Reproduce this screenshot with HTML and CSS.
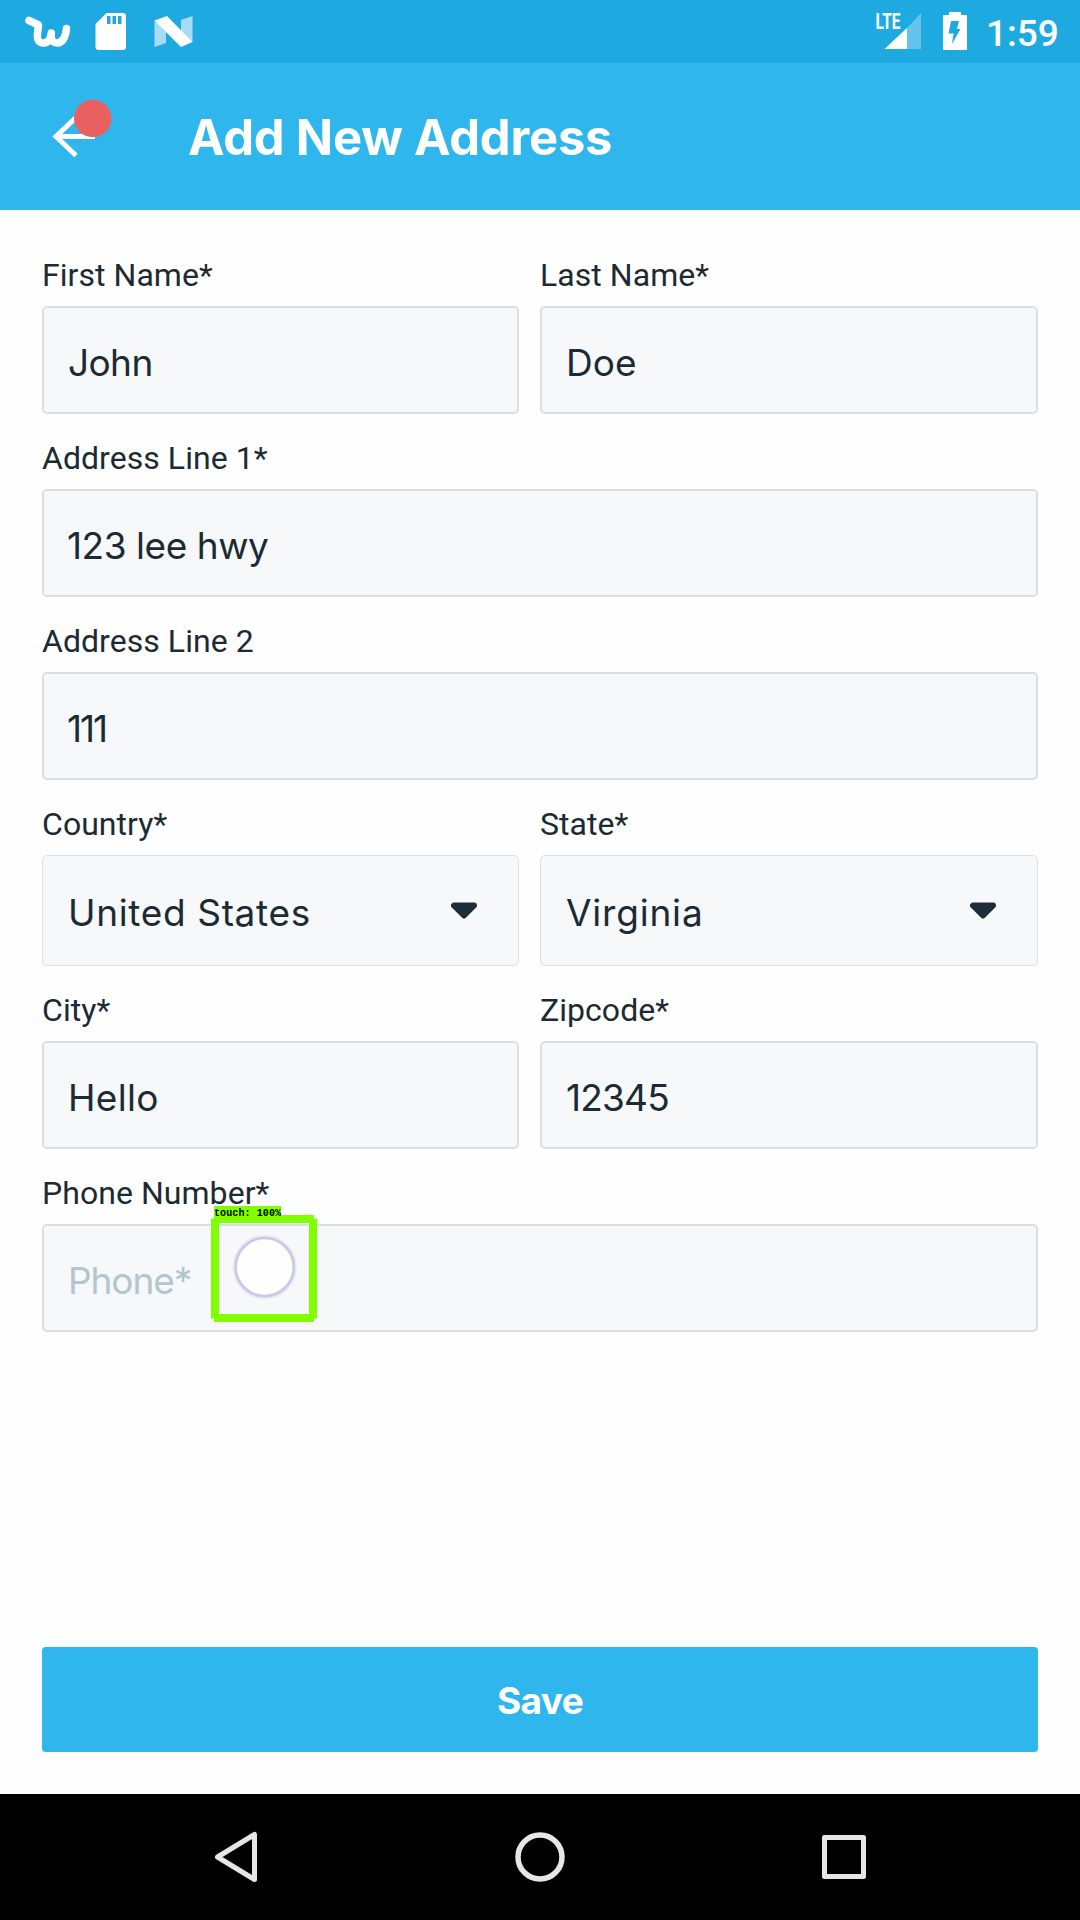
FILE: index.html
```html
<!DOCTYPE html>
<html lang="en">
<head>
<meta charset="utf-8">
<title>Add New Address</title>
<link rel="stylesheet" href="styles.css">
</head>
<body>
<div class="screen">
  <div class="status-bar">
    <svg class="status-icons" width="200" height="63" viewBox="0 0 200 63">
      <g fill="none" stroke="#fff" stroke-width="7.5" stroke-linejoin="round">
        <path stroke-linecap="round" d="M29 20.5 L38.5 25 L37.3 35 Q37 43 43.5 43 Q50 43 51.3 33 Q50.500 43 57 43 Q65 42.500 66.500 28.500"/>
      </g>
      <path fill="#fff" d="M106.500 13 H123 Q126 13 126 16 V47 Q126 50 123 50 H98.500 Q95.500 50 95.500 47 V24 Z"/>
      <path fill="#1fa9e1" d="M107 16h3.500v8h-3.500z M112.500 16h3.500v8h-3.500z M118 16h3.500v8h-3.500z"/>
      <path fill="#a6dcf4" d="M154.500 20.500 L166 31 V43 L154.500 47 Z M192.500 16 V42 L181 32 V20 Z"/>
      <path fill="#fff" d="M154.500 20.500 L167 16 L192.500 42 L181 47 Z"/>
    </svg>
    <div class="status-right">
      <svg width="104" height="63" viewBox="870 0 104 63">
        <text class="lte" x="875.500" y="29" textLength="25" lengthAdjust="spacingAndGlyphs">LTE</text>
        <path fill="#65c4ec" d="M921 13 V49 H907 V28 Z"/>
        <path fill="#fff" d="M884.500 49 L907 28 V49 Z"/>
        <path fill="#fff" d="M943 15 H949 V12 H961 V15 H967 V50 H943 Z"/>
        <path fill="#1fa9e1" d="M951 21 H959 L957 29 H960.500 L952 44 L953.500 33.500 H948.500 Z"/>
      </svg>
      <span class="clock">1:59</span>
    </div>
  </div>

  <header class="app-bar">
    <svg class="back" width="72" height="70" viewBox="48 94 72 70">
      <path d="M76 117.500 L56 136.500 L76 155.500 M56 136.500 H95" fill="none" stroke="#fff" stroke-width="5"/>
      <circle cx="92.700" cy="118.500" r="18.700" fill="#ea6060"/>
    </svg>
    <h1 class="title">Add New Address</h1>
  </header>

  <main class="form">
    <div class="field"><div class="label">First Name*</div><div class="box"><span class="v-john">John</span></div></div>
    <div class="field"><div class="label">Last Name*</div><div class="box"><span>Doe</span></div></div>
    <div class="field wide"><div class="label">Address Line 1*</div><div class="box"><span class="v-street">123 lee hwy</span></div></div>
    <div class="field wide"><div class="label">Address Line 2</div><div class="box"><span class="v-unit">111</span></div></div>
    <div class="field"><div class="label">Country*</div><div class="box select"><span class="v-country">United States</span>
      <svg class="caret" width="26" height="17" viewBox="0 0 26 17"><path d="M3 3.500 H23 L13 13.500 Z"/></svg></div></div>
    <div class="field"><div class="label">State*</div><div class="box select"><span class="v-state">Virginia</span>
      <svg class="caret" width="26" height="17" viewBox="0 0 26 17"><path d="M3 3.500 H23 L13 13.500 Z"/></svg></div></div>
    <div class="field"><div class="label">City*</div><div class="box"><span class="v-city">Hello</span></div></div>
    <div class="field"><div class="label">Zipcode*</div><div class="box"><span class="v-zip">12345</span></div></div>
    <div class="field wide"><div class="label">Phone Number*</div><div class="box"><span class="placeholder">Phone*</span></div></div>
  </main>

  <div class="actions"><div class="save">Save</div></div>

  <nav class="nav-bar">
    <svg width="1080" height="126" viewBox="0 1794 1080 126" fill="none" stroke="#e6e6e6" stroke-width="5" stroke-linejoin="round">
      <path d="M254.500 1834.500 V1879.500 L217.500 1857 Z"/>
      <circle cx="540" cy="1857" r="22" stroke-width="5.500"/>
      <rect x="824.500" y="1837.500" width="39" height="39"/>
    </svg>
  </nav>

  <div class="touch">
    <svg width="106" height="107" viewBox="0 0 106 107">
      <path fill="#7fff00" fill-rule="evenodd" d="M3 0H103V3.500H106V103.500H103V107H3V103.500H0V3.500H3Z M8 8V99H98V8Z"/>
      <circle cx="53.700" cy="52" r="30" fill="none" stroke="#e7e6f4" stroke-width="4"/>
      <circle cx="53.700" cy="52" r="29" fill="#fdfdfe" stroke="#c9c8e1" stroke-width="2.500"/>
    </svg>
    <span class="touch-label">touch: 100%</span>
  </div>
</div>
</body>
</html>
```
FILE: styles.css
```css
* { box-sizing: border-box; }
body { margin: 0; background: #fefefe; font-family: Roboto, sans-serif; color: #1c2b33; }
svg { display: block; flex: none; }

.screen { position: relative; width: 1080px; height: 1920px; display: flex; flex-direction: column; overflow: hidden; }

.status-bar { height: 63px; flex: none; background: #1fa9e1; display: flex; justify-content: space-between; }
.status-right { display: flex; width: 210px; }
.lte { font: 700 22px Roboto, sans-serif; fill: #fff; }
.clock { margin-left: 12px; padding-top: 12px; font-size: 37px; font-weight: 500; line-height: 44px; color: #fff; white-space: nowrap; }

.app-bar { height: 147px; flex: none; background: #2fb6ec; display: flex; align-items: flex-start; padding: 31px 48px 0; }
.title { margin: 14px 0 0 68px; font: 700 49px/60px Inter, sans-serif; letter-spacing: -0.25px; color: #fff; white-space: nowrap; }

.form { flex: 1; display: grid; grid-template-columns: 477px 498px; column-gap: 21px; row-gap: 25px; align-content: start; padding: 46px 42px 0; }
.field { display: flex; flex-direction: column; gap: 12px; }
.wide { grid-column: span 2; }
.label { font-size: 32px; line-height: 38px; letter-spacing: 0.05px; white-space: nowrap; }
.box { height: 108px; display: flex; align-items: center; padding: 5px 24px 0; border: 2px solid #d7e0e5; border-radius: 5px; background: #f6f8fa; font: 400 37px/46px Inter, sans-serif; white-space: nowrap; }
.select { height: 111px; justify-content: space-between; padding: 4px 41px 0 25px; border: 1px solid #dbe2e8; }
.caret { margin-top: -5px; fill: #1c2e38; stroke: #1c2e38; stroke-width: 6; stroke-linejoin: round; }
.placeholder { color: #b1c6ce; letter-spacing: -1.1px; }

.v-john { letter-spacing: -0.6px; }
.v-street { margin-left: -1px; letter-spacing: -0.45px; }
.v-unit { margin-left: -1px; letter-spacing: -2px; }
.v-country { letter-spacing: 0.65px; }
.v-state { letter-spacing: 0.8px; }
.v-city { letter-spacing: 0.3px; }
.v-zip { letter-spacing: -0.8px; }

.actions { padding: 0 42px 42px; }
.save { height: 105px; padding-top: 1px; border-radius: 4px; background: #2fb6ec; color: #fff; font: 700 37px/105px Inter, sans-serif; letter-spacing: -0.6px; text-align: center; }

.nav-bar { height: 126px; flex: none; background: #000; }

.touch { position: absolute; left: 211px; top: 1215px; }
.touch-label { position: absolute; left: 3px; top: -9px; width: 67px; height: 13px; background: #7fff00; font: 700 10px/15px "Liberation Mono", monospace; letter-spacing: 0.1px; color: #000; white-space: nowrap; }
```
